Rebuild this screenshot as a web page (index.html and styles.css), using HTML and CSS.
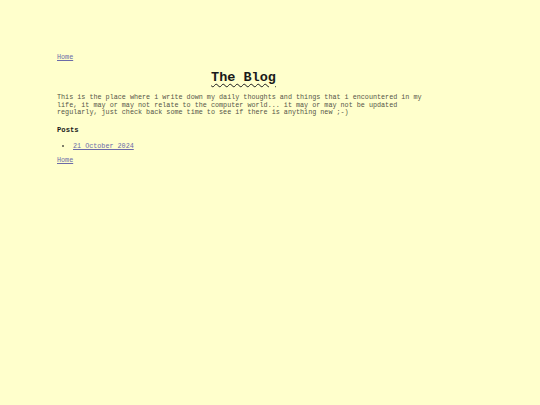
FILE: index.html
```html
<!DOCTYPE html>
<html>
<head>
<meta charset="utf-8">
<title>The Blog</title>
<link rel="stylesheet" href="styles.css">
</head>
<body>
<div class="page">
  <div class="nav"><a href="#">Home</a></div>
  <h1 class="title">The Blog</h1>
  <p class="intro">This is the place where i write down my daily thoughts and things that i encountered in my life, it may or may not relate to the computer world... it may or may not be updated regularly, just check back some time to see if there is anything new ;-)</p>
  <h2 class="section">Posts</h2>
  <ul class="posts">
    <li><a href="#">21 October 2024</a></li>
  </ul>
  <div class="nav"><a href="#">Home</a></div>
</div>
</body>
</html>
```
FILE: styles.css
```css
html, body {
  margin: 0;
  padding: 0;
  background: #ffffcc;
}
body {
  font-family: "Liberation Mono", "Courier New", monospace;
  font-size: 6.75px;
  color: #555548;
}
.page {
  margin-left: 57px;
  width: 373px;
  padding-top: 53px;
}
.nav {
  line-height: 8px;
}
a {
  color: #6b6ba8;
}
.title {
  margin: 9px 0 0;
  font-size: 13.5px;
  line-height: 16px;
  text-align: center;
  color: #1a1a1a;
  text-decoration: underline wavy #1a1a1a;
  text-decoration-thickness: 1px;
  text-underline-offset: 2px;
}
.intro {
  margin: 8px 0 0;
  line-height: 7.5px;
}
.section {
  margin: 9px 0 0;
  font-size: 7.2px;
  line-height: 8px;
  color: #1a1a1a;
}
.posts {
  margin: 8px 0 0;
  padding-left: 16px;
  line-height: 8px;
}
.posts + .nav {
  margin-top: 6px;
}
```
